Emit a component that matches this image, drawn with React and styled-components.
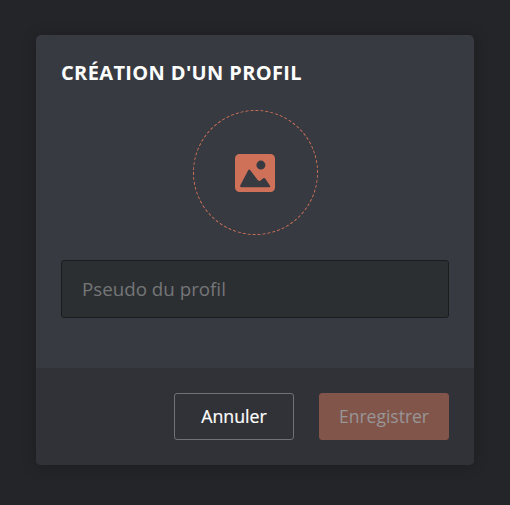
import React from 'react';
import styled, { createGlobalStyle } from 'styled-components';

const GlobalStyle = createGlobalStyle`
  *, *::before, *::after { box-sizing: border-box; }
  body { margin: 0; background: #242528; font-family: "Open Sans", "Noto Sans", sans-serif; }
`;

const Backdrop = styled.main`
  display: flex;
  justify-content: center;
  align-items: flex-start;
  min-height: 100vh;
  padding-top: 35px;
  background: #242528;
`;

const Dialog = styled.form`
  display: flex;
  flex-direction: column;
  width: 438px;
  height: 430px;
  border-radius: 5px;
  background: #373a41;
  box-shadow: 0 1px 15px rgba(0, 0, 0, 0.22);
  overflow: hidden;
`;

const Body = styled.div`
  flex: 1;
  display: flex;
  flex-direction: column;
  padding: 25px 25px 0;
`;

const Title = styled.h1`
  margin: 0 0 24px;
  color: #fff;
  font-size: 20px;
  font-weight: 700;
  line-height: 26px;
  letter-spacing: 0.36px;
  text-transform: uppercase;
  white-space: nowrap;
`;

const AvatarPicker = styled.div`
  display: flex;
  align-items: center;
  justify-content: center;
  align-self: center;
  width: 125px;
  height: 125px;
  margin-bottom: 25px;
  border: 1px dashed #cf7158;
  border-radius: 50%;

  svg { display: block; }
`;

const NameInput = styled.input`
  width: 100%;
  height: 58px;
  padding: 0 20px 2px;
  border: 1px solid #1b1c1e;
  border-radius: 3px;
  outline: none;
  background: #2c2f32;
  color: #fff;
  font: 400 18.75px "Open Sans", "Noto Sans", sans-serif;

  &::placeholder { color: #747678; opacity: 1; }
`;

const Footer = styled.footer`
  display: flex;
  justify-content: flex-end;
  gap: 25px;
  height: 97px;
  padding: 25px;
  background: #313237;
`;

const Button = styled.button`
  width: ${({ $primary }) => ($primary ? 130 : 120)}px;
  height: 47px;
  padding: 0;
  border: 1px solid ${({ $primary }) => ($primary ? '#82554b' : '#707175')};
  border-radius: 3px;
  background: ${({ $primary }) => ($primary ? '#82554b' : 'transparent')};
  color: ${({ $primary }) => ($primary ? '#989697' : '#fff')};
  font: ${({ $primary }) => ($primary ? '400 17.5px/45px' : '400 17.75px/45px')} "Open Sans", "Noto Sans", sans-serif;
  -webkit-text-stroke: ${({ $primary }) => ($primary ? '0' : '0.2px')};
`;

const PictureIcon = () => (
  <svg width="40" height="38" viewBox="0 0 40 38" aria-hidden="true">
    <path
      fill="#cf7158"
      fillRule="evenodd"
      d="M4.5 0h31A4.5 4.5 0 0 1 40 4.5v29a4.5 4.5 0 0 1-4.5 4.5h-31A4.5 4.5 0 0 1 0 33.500v-29A4.500 4.500 0 0 1 4.500 0ZM25.900 6.600a4.500 4.500 0 1 0 0 9a4.500 4.500 0 0 0 0-9ZM13.200 16.200L5.200 31.500Q4.700 33.300 6.200 33.300H34.200Q35.700 33.300 35 31.700L30.400 24.800Q29.200 23.200 27.800 24.600L25.700 26.500Q24.200 27.600 22.900 26.200L15.500 16.400Q14.200 14.900 13.200 16.200Z"
    />
  </svg>
);

export default function App() {
  return (
    <>
      <GlobalStyle />
      <Backdrop>
        <Dialog>
          <Body>
            <Title>Création d'un profil</Title>
            <AvatarPicker>
              <PictureIcon />
            </AvatarPicker>
            <NameInput type="text" placeholder="Pseudo du profil" />
          </Body>
          <Footer>
            <Button type="button">Annuler</Button>
            <Button type="submit" $primary disabled>Enregistrer</Button>
          </Footer>
        </Dialog>
      </Backdrop>
    </>
  );
}
